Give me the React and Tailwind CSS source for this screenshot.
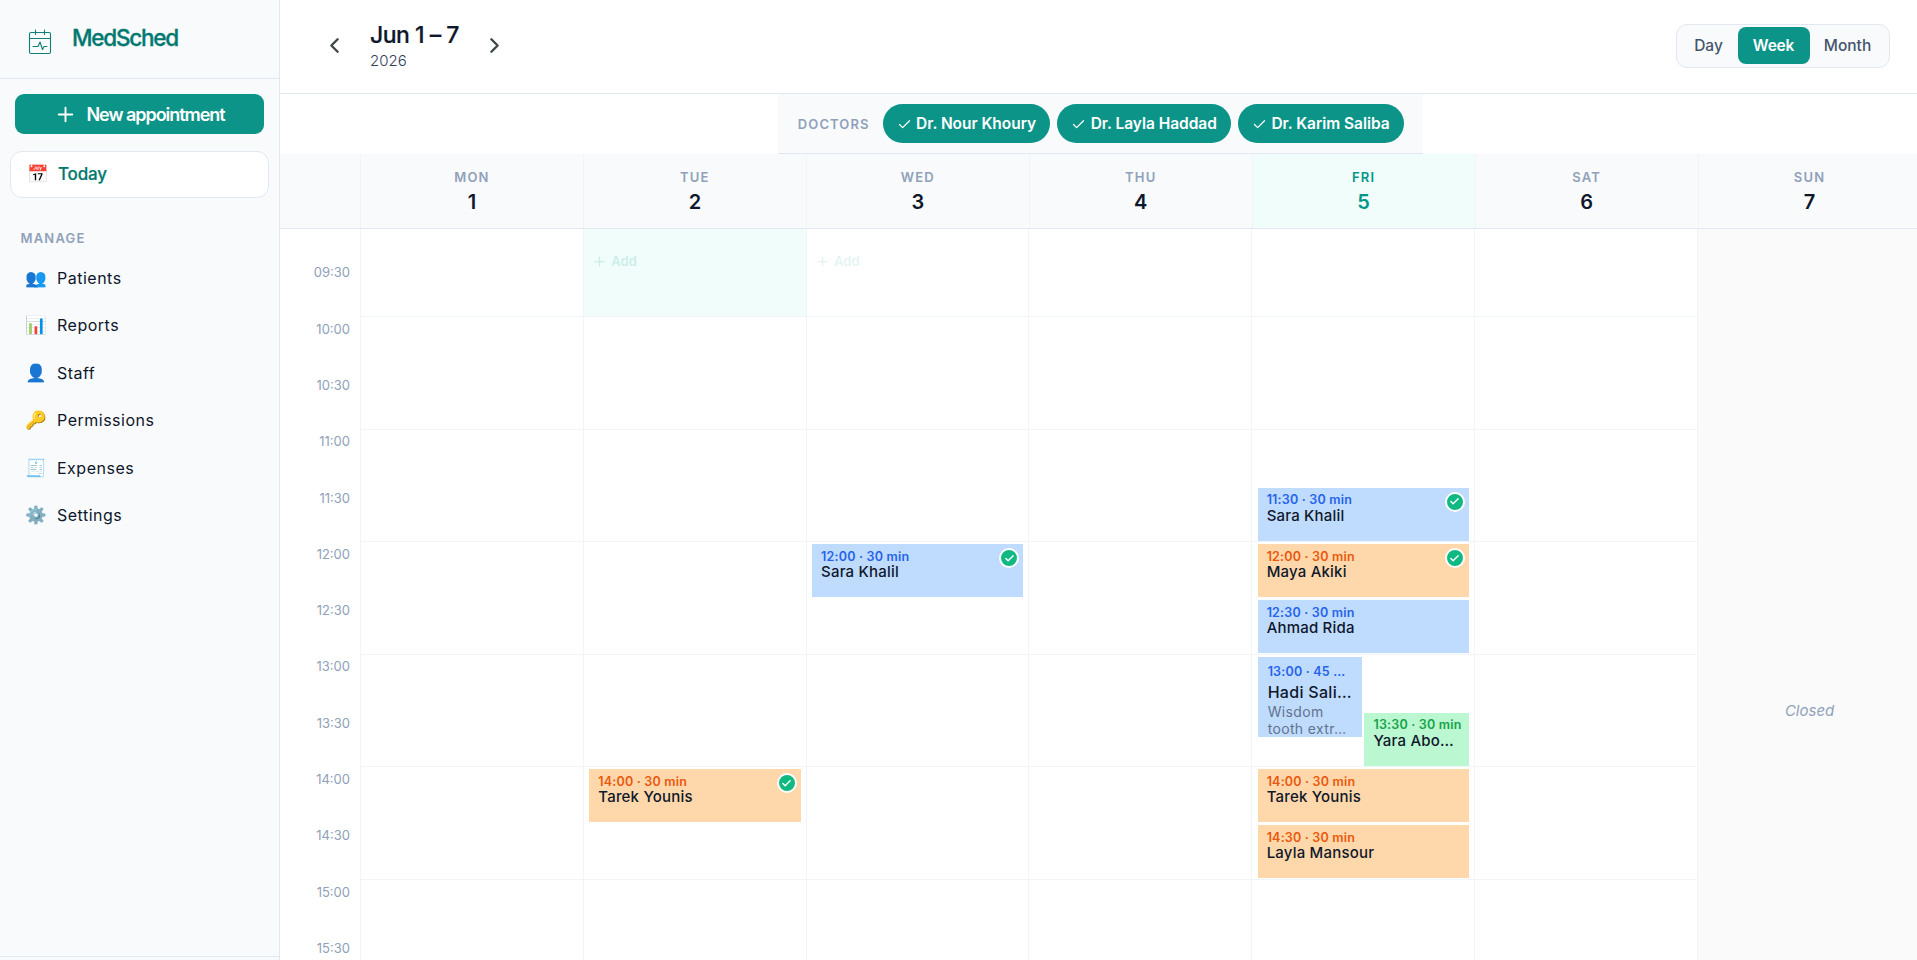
import React from 'react';
import { Check, ChevronLeft, ChevronRight, Plus } from 'lucide-react';

const HOUR = 112.5;
const FIRST_HOUR = 10;
const FIRST_CELL = 87.5;

const navItems = [
  { icon: '👥', label: 'Patients' },
  { icon: '📊', label: 'Reports' },
  { icon: '👤', label: 'Staff' },
  { icon: '🔑', label: 'Permissions' },
  { icon: '🧾', label: 'Expenses' },
  { icon: '⚙️', label: 'Settings' },
];

const doctors = ['Dr. Nour Khoury', 'Dr. Layla Haddad', 'Dr. Karim Saliba'];

const times = [
  '09:30', '10:00', '10:30', '11:00', '11:30', '12:00', '12:30',
  '13:00', '13:30', '14:00', '14:30', '15:00', '15:30',
];

const tones = {
  blue: { bg: 'bg-[#bfdbfe]', text: 'text-[#2563eb]' },
  orange: { bg: 'bg-[#fed7aa]', text: 'text-[#ea580c]' },
  green: { bg: 'bg-[#bbf7d0]', text: 'text-[#16a34a]' },
};

const days = [
  { name: 'MON', num: 1, events: [] },
  {
    name: 'TUE',
    num: 2,
    add: 'opacity-15',
    hover: true,
    events: [{ start: 14, mins: 30, time: '14:00', name: 'Tarek Younis', tone: 'orange', done: true }],
  },
  {
    name: 'WED',
    num: 3,
    add: 'opacity-10',
    events: [{ start: 12, mins: 30, time: '12:00', name: 'Sara Khalil', tone: 'blue', done: true }],
  },
  { name: 'THU', num: 4, events: [] },
  {
    name: 'FRI',
    num: 5,
    today: true,
    events: [
      { start: 11.5, mins: 30, time: '11:30', name: 'Sara Khalil', tone: 'blue', done: true },
      { start: 12, mins: 30, time: '12:00', name: 'Maya Akiki', tone: 'orange', done: true },
      { start: 12.5, mins: 30, time: '12:30', name: 'Ahmad Rida', tone: 'blue' },
      { start: 13, mins: 45, time: '13:00', name: 'Hadi Sali…', tone: 'blue', note: ['Wisdom', 'tooth extr…'], lane: 'left' },
      { start: 13.5, mins: 30, time: '13:30', name: 'Yara Abo…', tone: 'green', lane: 'right' },
      { start: 14, mins: 30, time: '14:00', name: 'Tarek Younis', tone: 'orange' },
      { start: 14.5, mins: 30, time: '14:30', name: 'Layla Mansour', tone: 'orange' },
    ],
  },
  { name: 'SAT', num: 6, events: [] },
  { name: 'SUN', num: 7, closed: true, events: [] },
];

const lanes = {
  full: 'left-[5.5px] right-[5px]',
  left: 'left-[5.5px] w-[104.5px]',
  right: 'right-[5px] w-[104.5px]',
};

const Logo = () => (
  <svg width="24" height="26" viewBox="0 0 24 26" fill="none" stroke="#0f8078" strokeWidth="1.1" strokeLinecap="round" strokeLinejoin="round">
    <rect x="1.5" y="3.5" width="21" height="21" rx="1.5" />
    <path d="M1.5 9.5h21M7.5 1v4.5M16.5 1v4.5" />
    <path d="M5 17.5h5l2-4.5 2.5 7.5 1.5-3h3" />
  </svg>
);

const Sidebar = () => (
  <aside className="flex w-[280px] shrink-0 flex-col border-r border-slate-200 bg-slate-50">
    <div className="flex h-[79px] items-center border-b border-slate-200 pl-7">
      <div className="mt-1.5">
        <Logo />
      </div>
      <span className="mb-[2px] ml-5 text-[22.5px] leading-7 font-medium tracking-[-1.25px] text-teal-700 [-webkit-text-stroke:0.3px]">MedSched</span>
    </div>

    <button className="mx-[15px] mt-[15px] flex h-10 items-center justify-center gap-[10px] rounded-[9px] bg-[#0d9488] pt-px pr-px text-lg font-semibold tracking-[-1.05px] text-white">
      <Plus size={23} strokeWidth={2} />
      New appointment
    </button>

    <div className="mx-[10px] mt-[17px] flex h-[47px] items-center rounded-xl border border-slate-200 bg-white pl-[15.5px]">
      <span className="w-[31.5px] text-[17.5px]">📅</span>
      <span className="text-[17px] font-medium tracking-[-0.2px] text-teal-700 [-webkit-text-stroke:0.2px]">Today</span>
    </div>

    <p className="mt-[30px] ml-[20.5px] text-[13px] leading-5 font-semibold tracking-[1.2px] text-slate-400">MANAGE</p>

    <nav className="mt-[6px] flex flex-col">
      {navItems.map((item) => (
        <a key={item.label} className="flex h-[47.5px] items-center pl-[25px]">
          <span className="w-8 text-[17.5px]">{item.icon}</span>
          <span className="text-base tracking-[0.5px] text-slate-900">{item.label}</span>
        </a>
      ))}
    </nav>

    <div className="mt-auto h-[4px] border-t border-slate-200" />
  </aside>
);

const TopBar = () => (
  <header className="flex h-[94px] items-center justify-between border-b border-slate-200 pr-[31px] pb-[2px] pl-[42px]">
    <div className="flex items-center">
      <ChevronLeft size={25} strokeWidth={2.3} className="text-[#3f4845]" />
      <div className="ml-[23px] w-[89px]">
        <p className="text-[23px] leading-7 font-medium tracking-[-0.5px] whitespace-nowrap text-slate-900 [-webkit-text-stroke:0.2px]">Jun 1 – 7</p>
        <p className="mt-[2px] text-[15px] leading-5 font-light text-slate-700">2026</p>
      </div>
      <ChevronRight size={25} strokeWidth={2.3} className="ml-[23px] text-[#3f4845]" />
    </div>
    <div className="flex h-11 items-center rounded-[11px] border border-slate-200 bg-slate-50 px-[3px] text-[15.5px] font-medium text-slate-600">
      <button className="w-[58px]">Day</button>
      <button className="h-[37px] w-[72px] rounded-lg bg-[#0d9488] font-semibold tracking-[-0.2px] text-white">Week</button>
      <button className="w-[76px]">Month</button>
    </div>
  </header>
);

const DoctorBar = () => (
  <div className="flex h-[60px] items-center justify-center">
    <div className="flex h-full items-center border-b border-slate-200 bg-slate-50 pr-[19px] pl-5">
      <span className="mr-[13px] pt-[2px] text-[13px] font-semibold tracking-[1.1px] text-slate-400">DOCTORS</span>
      <div className="flex gap-[7px]">
        {doctors.map((name) => (
          <span key={name} className="flex h-[39px] items-center gap-[4.5px] rounded-full bg-[#0d9488] px-[14px] pt-px text-[15.5px] font-semibold tracking-[-0.03px] text-white">
            <Check size={15} strokeWidth={2} />
            {name}
          </span>
        ))}
      </div>
    </div>
  </div>
);

const DayHeader = () => (
  <div className="flex h-[75px] border-b border-slate-200 bg-slate-50">
    <div className="w-20 shrink-0" />
    {days.map((day) => (
      <div
        key={day.name}
        className={`flex flex-1 flex-col items-center border-l border-slate-100 pt-[12.5px] ${day.today ? 'bg-[#f0fdfa]' : ''}`}
      >
        <span className={`text-[13px] leading-5 font-semibold tracking-[1.2px] ${day.today ? 'text-teal-600' : 'text-slate-400'}`}>
          {day.name}
        </span>
        <span className={`text-xl leading-[30px] font-semibold ${day.today ? 'text-teal-600' : 'text-slate-900'}`}>
          {day.num}
        </span>
      </div>
    ))}
  </div>
);

const EventCard = ({ event }) => {
  const tone = tones[event.tone];
  const top = FIRST_CELL + (event.start - FIRST_HOUR) * HOUR + 2.5;
  const height = (event.mins / 60) * HOUR - 3.5;

  return (
    <div
      className={`absolute ${lanes[event.lane || 'full']} ${tone.bg} ${event.note ? 'pt-[6px] pl-[10px]' : 'pt-[4.6px] pl-[9px]'}`}
      style={{ top, height }}
    >
      <p className={`text-[12.5px] font-semibold tracking-[0.2px] whitespace-nowrap ${tone.text} ${event.note ? 'leading-[18px]' : 'leading-4'}`}>
        {event.time} · {event.mins} {event.note ? '…' : 'min'}
      </p>
      <p className={`font-medium whitespace-nowrap text-slate-900 ${event.note ? 'text-base leading-[22px] tracking-[0.3px]' : '-mt-[1.5px] text-[15px] leading-[18px] tracking-[0.2px]'}`}>
        {event.name}
      </p>
      {event.note && (
        <p className="text-sm leading-[17px] tracking-[0.35px] text-slate-500">
          {event.note[0]}
          <br />
          {event.note[1]}
        </p>
      )}
      {event.done && (
        <span className="absolute top-1 right-1 flex size-5 items-center justify-center rounded-full border-2 border-white bg-[#10b981] text-white">
          <Check size={11} strokeWidth={3} />
        </span>
      )}
    </div>
  );
};

const DayColumn = ({ day }) => {
  if (day.closed) {
    return (
      <div className="flex flex-1 justify-center border-l border-slate-100 bg-[#fafafa] pt-[472px] pl-px">
        <span className="text-[15px] leading-5 text-slate-400 italic">Closed</span>
      </div>
    );
  }

  return (
    <div className="relative flex-1 border-l border-slate-100">
      <div className={`h-[88px] border-b border-slate-100 pt-[22px] pl-2 ${day.hover ? 'bg-[#f0fdfa]' : ''}`}>
        {day.add && (
          <span className={`flex items-center gap-[4.5px] text-[13px] leading-5 font-semibold text-teal-600 ${day.add}`}>
            <Plus size={15} />
            Add
          </span>
        )}
      </div>
      {[11, 12, 13, 14, 15, 16].map((hour) => (
        <div key={hour} className="h-[112.5px] border-b border-slate-100" />
      ))}
      {day.events.map((event) => (
        <EventCard key={event.time} event={event} />
      ))}
    </div>
  );
};

const WeekGrid = () => (
  <div className="flex h-[731px] overflow-hidden">
    <div className="w-20 shrink-0 pt-4 pr-[10px] text-right text-[13px] text-slate-400">
      {times.map((time) => (
        <div key={time} className="flex h-[56.3px] items-center justify-end">{time}</div>
      ))}
    </div>
    {days.map((day) => (
      <DayColumn key={day.name} day={day} />
    ))}
  </div>
);

export default function App() {
  return (
    <div className="h-[960px] overflow-hidden bg-white font-[Inter,sans-serif]">
      <div className="flex h-full w-[1920.5px]">
        <Sidebar />
        <main className="flex min-w-0 flex-1 flex-col">
          <TopBar />
          <DoctorBar />
          <DayHeader />
          <WeekGrid />
        </main>
      </div>
    </div>
  );
}
